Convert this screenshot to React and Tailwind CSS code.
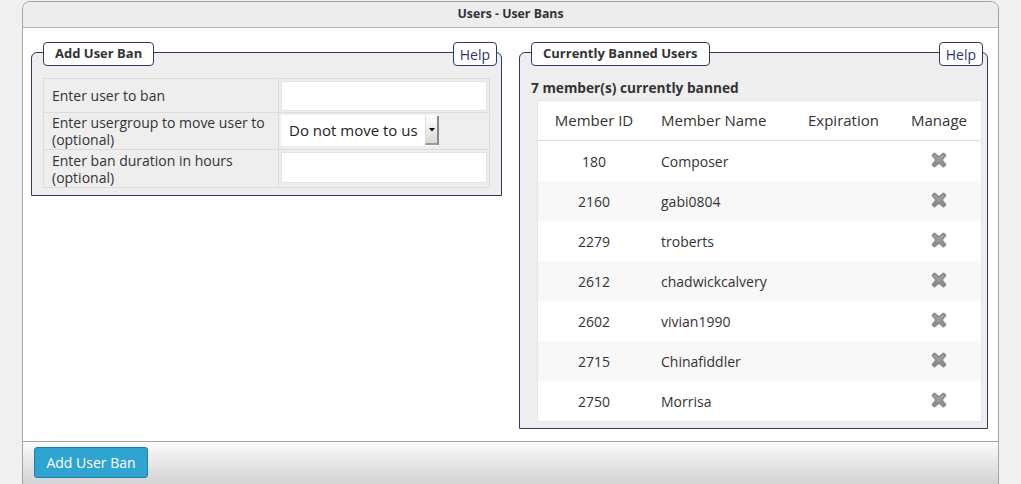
import React from "react";

const font = { fontFamily: "'Open Sans', 'Liberation Sans', sans-serif" };

function XIcon() {
  return (
    <svg width="18" height="18" viewBox="0 0 18 18">
      <defs>
        <linearGradient id="xg" x1="0" y1="0" x2="0" y2="1">
          <stop offset="0" stopColor="#b0b0b0" />
          <stop offset="1" stopColor="#888888" />
        </linearGradient>
      </defs>
      <path
        d="M2.5 4.5 L4.5 2.5 L9 6.3 L13.5 2.5 L15.5 4.5 L11.7 9 L15.5 13.5 L13.5 15.5 L9 11.7 L4.5 15.5 L2.5 13.5 L6.3 9 Z"
        fill="url(#xg)"
        stroke="#8a8a8a"
        strokeWidth="1.8"
        strokeLinejoin="round"
      />
    </svg>
  );
}

function Fieldset({ title, className, children }) {
  return (
    <div className={"border border-[#2e3866] rounded-t-[6px] bg-[#eeeeee] " + className}>
      <div className="-mt-[11px] flex items-start justify-between pl-[11px] pr-[4px]">
        <div className="h-[24px] px-[11px] flex items-center bg-white border border-[#2e3866] rounded-[4px] text-[13px] font-bold text-[#333]">
          {title}
        </div>
        <div className="h-[24px] px-[6px] flex items-center bg-white border border-[#2e3866] rounded-[4px] text-[14px] text-[#2e3866]">
          Help
        </div>
      </div>
      {children}
    </div>
  );
}

const rows = [
  ["180", "Composer"],
  ["2160", "gabi0804"],
  ["2279", "troberts"],
  ["2612", "chadwickcalvery"],
  ["2602", "vivian1990"],
  ["2715", "Chinafiddler"],
  ["2750", "Morrisa"],
];

export default function App() {
  return (
    <div className="w-[1021px] h-[484px] overflow-hidden bg-[#f0f0f0] pt-px" style={font}>
      <div className="ml-[22px] w-[977px] h-[500px] border border-[#a3a3a3] rounded-t-[8px] bg-white flex flex-col">
        <div className="h-[26px] shrink-0 bg-[#ededed] border-b border-[#b5b5b5] rounded-t-[8px] flex items-center justify-center text-[12.3px] font-bold text-[#333]">
          Users - User Bans
        </div>
        <div className="h-[413px] shrink-0 flex items-start pt-[24px] pl-[8px] gap-[17px]">
          <Fieldset title="Add User Ban" className="w-[471px]">
            <div className="mt-[12px] mx-[11px] mb-[7px] border border-[#dcdcdc] text-[14px] leading-[17px] text-[#333]">
              <div className="flex h-[34px] border-b border-[#dcdcdc]">
                <div className="w-[235px] border-r border-[#dcdcdc] pl-[8px] flex items-center">Enter user to ban</div>
                <div className="flex-1 p-[2px] pr-[2px]">
                  <div className="h-[30px] bg-white border border-[#e4e4e4]" />
                </div>
              </div>
              <div className="flex h-[37px] border-b border-[#dcdcdc]">
                <div className="w-[235px] border-r border-[#dcdcdc] pl-[8px] flex items-center">
                  Enter usergroup to move user to (optional)
                </div>
                <div className="flex-1 p-[2px] flex items-start">
                  <div className="h-[31px] w-[158px] bg-white flex items-stretch">
                    <div className="flex-1 pl-[8px] flex items-center text-[15px] text-[#222] whitespace-nowrap overflow-hidden">
                      Do not move to us
                    </div>
                    <div className="w-[14px] my-[1px] border-l border-[#ddd] border-r-2 border-r-[#888] border-b-2 border-b-[#999] bg-gradient-to-b from-[#ffffff] to-[#d8d8d8] flex items-center justify-center">
                      <svg width="6" height="4" viewBox="0 0 6 4"><path d="M0 0 H6 L3 3.5 Z" fill="#111" /></svg>
                    </div>
                  </div>
                </div>
              </div>
              <div className="flex h-[37px]">
                <div className="w-[235px] border-r border-[#dcdcdc] pl-[8px] flex items-center">
                  Enter ban duration in hours (optional)
                </div>
                <div className="flex-1 p-[2px]">
                  <div className="h-[31px] bg-white border border-[#e4e4e4]" />
                </div>
              </div>
            </div>
          </Fieldset>
          <Fieldset title="Currently Banned Users" className="w-[469px]">
            <div className="mt-[12px] pl-[11px] text-[13.7px] font-bold text-[#333] leading-[19px]">
              7 member(s) currently banned
            </div>
            <div className="mt-[3px] ml-[17px] mr-[5px] mb-[6px] bg-white border border-[#e6e6e6] text-[14px] text-[#333]">
              <div className="grid grid-cols-[112px_147px_100px_1fr] h-[40px] items-center border-b border-[#dddddd] text-[15px]">
                <div className="text-center">Member ID</div>
                <div className="pl-[11px]">Member Name</div>
                <div className="pl-[11px]">Expiration</div>
                <div className="text-center">Manage</div>
              </div>
              {rows.map(([id, name], i) => (
                <div
                  key={id}
                  className={
                    "grid grid-cols-[112px_147px_100px_1fr] h-[40px] items-center " +
                    (i % 2 === 1 ? "bg-[#f8f8f8]" : "bg-white")
                  }
                >
                  <div className="text-center">{id}</div>
                  <div className="pl-[11px]">{name}</div>
                  <div />
                  <div className="flex justify-center -mt-[3px]">
                    <XIcon />
                  </div>
                </div>
              ))}
            </div>
          </Fieldset>
        </div>
        <div className="flex-1 border-t border-[#a3a3a3] bg-gradient-to-b from-[#fbfbfb] to-[#c4c4c4] pl-[11px] pt-[5px]">
          <button className="h-[31px] w-[114px] rounded-[3px] bg-[#2fa4d0] border border-[#1d7fa9] text-white text-[14px]">
            Add User Ban
          </button>
        </div>
      </div>
    </div>
  );
}
